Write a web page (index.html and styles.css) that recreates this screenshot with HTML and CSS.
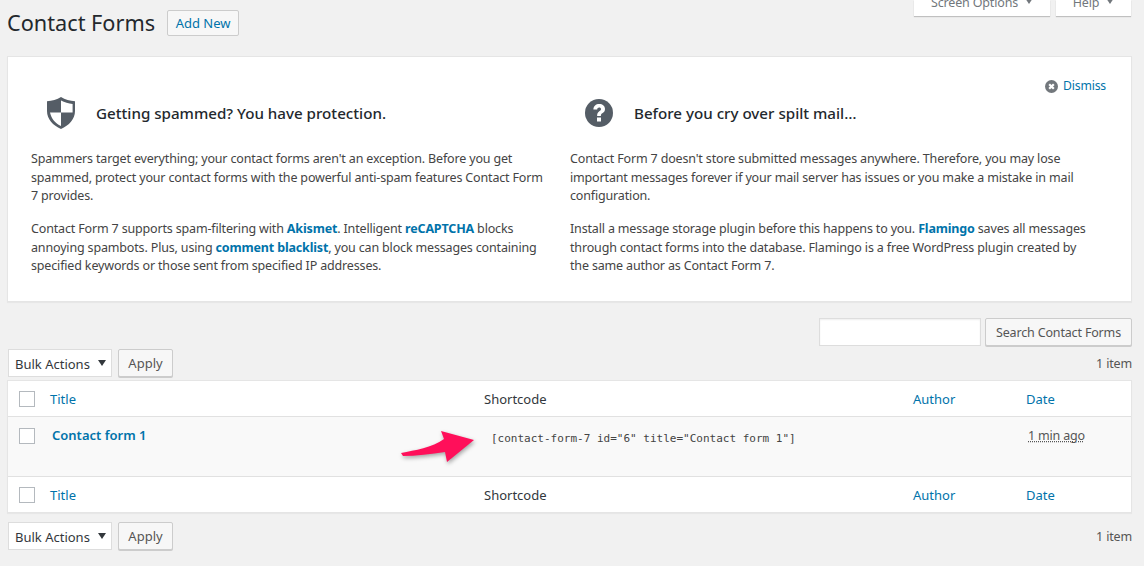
FILE: index.html
```html
<!DOCTYPE html>
<html lang="en">
<head>
<meta charset="utf-8">
<title>Contact Forms</title>
<link rel="stylesheet" href="styles.css">
</head>
<body>
<div class="wrap">
  <header class="page-head">
    <h1>Contact Forms</h1>
    <a class="btn add-new">Add New</a>
    <div class="tabs">
      <div class="tab options"><span>Screen Options</span><i class="caret"></i></div>
      <div class="tab help"><span>Help</span><i class="caret"></i></div>
    </div>
  </header>

  <section class="welcome">
    <a class="dismiss">
      <svg width="13" height="13" viewBox="0 0 13 13"><circle cx="6.5" cy="6.5" r="6.5" fill="#72777c"/><path d="M4.200 4.200l4.600 4.600M8.800 4.200l-4.600 4.600" stroke="#fff" stroke-width="2.200"/></svg>
      Dismiss
    </a>
    <div class="col">
      <div class="col-head">
        <svg class="ico" width="28" height="32" viewBox="0 0 28 32"><path d="M14 0C18 2.600 23 4 28 4.200V14C28 22 22 28.500 14 32 6 28.500 0 22 0 14V4.200C5 4 10 2.600 14 0Z" fill="#555d66"/><path d="M14 3.600C17.500 5.500 21.500 6.700 25.600 7V15.500H14V29C8.500 26.300 4.400 22 3 15.500H14V3.600Z" fill="#fff"/></svg>
        <h2>Getting spammed? You have protection.</h2>
      </div>
      <p>Spammers target everything; your contact forms aren't an exception. Before you get spammed, protect your contact forms with the powerful anti-spam features Contact Form 7 provides.</p>
      <p>Contact Form 7 supports spam-filtering with <a>Akismet</a>. Intelligent <a>reCAPTCHA</a> blocks annoying spambots. Plus, using <a>comment blacklist</a>, you can block messages containing specified keywords or those sent from specified IP addresses.</p>
    </div>
    <div class="col right">
      <div class="col-head">
        <svg class="ico" width="28" height="28" viewBox="0 0 28 28"><circle cx="14" cy="14" r="14" fill="#555d66"/><path d="M8.400 10.600C8.400 7 11 5 14.200 5 17.600 5 20 7 20 10 20 12.300 18.800 13.300 17.300 14.300 16 15.200 15.900 15.700 15.900 17H12.100C12.100 14.700 12.600 13.500 14.300 12.300 15.400 11.500 16 11.100 16 10.200 16 9.200 15.300 8.600 14.200 8.600 13 8.600 12.200 9.400 12.200 10.600Z" fill="#fff"/><rect x="12" y="18.500" width="4" height="4" fill="#fff"/></svg>
        <h2>Before you cry over spilt mail&hellip;</h2>
      </div>
      <p>Contact Form 7 doesn't store submitted messages anywhere. Therefore, you may lose important messages forever if your mail server has issues or you make a mistake in mail configuration.</p>
      <p>Install a message storage plugin before this happens to you. <a>Flamingo</a> saves all messages through contact forms into the database. Flamingo is a free WordPress plugin created by the same author as Contact Form 7.</p>
    </div>
  </section>

  <div class="search-row">
    <input class="search" type="text" aria-label="Search">
    <a class="btn plain find">Search Contact Forms</a>
  </div>

  <div class="tablenav">
    <div class="select">Bulk Actions<i class="caret dark"></i></div>
    <a class="btn plain apply">Apply</a>
    <span class="count">1 item</span>
  </div>

  <div class="table-wrap">
    <table>
      <colgroup><col class="c-cb"><col class="c-title"><col class="c-code"><col class="c-author"><col class="c-date"></colgroup>
      <thead>
        <tr><td class="cb"><i class="check"></i></td><th class="th-title"><a>Title</a></th><th class="dark-th">Shortcode</th><th><a>Author</a></th><th><a>Date</a></th></tr>
      </thead>
      <tbody>
        <tr>
          <td class="cb"><i class="check"></i></td>
          <td class="name"><a>Contact form 1</a></td>
          <td class="code">[contact-form-7 id="6" title="Contact form 1"]</td>
          <td></td>
          <td class="date"><abbr>1 min ago</abbr></td>
        </tr>
      </tbody>
      <tfoot>
        <tr><td class="cb"><i class="check"></i></td><th class="th-title"><a>Title</a></th><th class="dark-th">Shortcode</th><th><a>Author</a></th><th><a>Date</a></th></tr>
      </tfoot>
    </table>
    <svg class="arrow" width="76" height="34" viewBox="0 0 76 34"><path d="M0 22C14 19 31 17 43 8L40 0 73 9 46 31 44 21C30 23 15 25 2 25Z" fill="#ff0f5a"/></svg>
  </div>

  <div class="tablenav bottom">
    <div class="select">Bulk Actions<i class="caret dark"></i></div>
    <a class="btn plain apply">Apply</a>
    <span class="count">1 item</span>
  </div>
</div>
</body>
</html>
```

FILE: styles.css
```css
* { box-sizing: border-box; }
html, body { margin: 0; height: 566px; overflow: hidden; }
body {
  background: #f1f1f1;
  color: #444;
  font: 12.500px/18.500px "Noto Sans", "Open Sans", sans-serif;
  letter-spacing: -.16px;
}
a { color: #0073aa; text-decoration: none; }
.wrap { padding: 0 12px 0 7px; }

.page-head { display: flex; align-items: flex-start; height: 56px; }
h1 { margin: 6px 0 0; font-size: 21.700px; font-weight: 400; line-height: 34px; color: #23282d; letter-spacing: 0; }
.btn {
  display: flex; align-items: center; justify-content: center;
  border: 1px solid #ccc; border-radius: 2px; background: #f7f7f7;
  white-space: nowrap;
}
.add-new { margin: 10px 0 0 12px; width: 72px; height: 26px; color: #0073aa; font-size: 13px; letter-spacing: 0; }
.tabs { display: flex; gap: 6px; margin: 0 1px 0 auto; }
.tab {
  height: 16px; display: flex; align-items: flex-end; gap: 7px; justify-content: center;
  background: #fff; box-shadow: 0 1px 1px rgba(0,0,0,.2);
  color: #72777c; overflow: hidden; line-height: 20px; padding-bottom: 3px;
}
.options { width: 136px; }
.help { width: 75px; }
.tab span { display: block; }
.caret { flex: none; width: 0; height: 0; border: 4px solid transparent; border-top: 6px solid #72777c; border-bottom: 0; margin-bottom: 9px; }

.welcome {
  position: relative; display: grid; grid-template-columns: 520px 520px; column-gap: 19px;
  height: 246px; padding: 40px 0 0 23px;
  background: #fff; border: 1px solid #e5e5e5; box-shadow: 0 1px 1px rgba(0,0,0,.04);
}
.dismiss { position: absolute; right: 25px; top: 20px; display: flex; align-items: center; gap: 5px; font-size: 12.200px; }
.col-head { display: flex; align-items: center; height: 32px; padding-left: 16px; gap: 21px; }
.col-head .ico { flex: none; }
.right .col-head { padding-left: 15px; }
h2 { margin: 0; font-size: 15.150px; font-weight: 500; color: #23282d; letter-spacing: 0; }
.col p { margin: 0 0 14.500px; }
.col p:first-of-type { margin-top: 21px; }
.col p a { font-weight: 700; }

.search-row { display: flex; justify-content: flex-end; gap: 4px; margin-top: 16px; height: 28px; }
.search { width: 162px; height: 28px; background: #fff; border: 1px solid #ddd; box-shadow: inset 0 1px 2px rgba(0,0,0,.07); }
.plain { height: 28px; color: #555; box-shadow: 0 1px 0 #ccc; }
.find { width: 147px; padding-top: 2px; }

.tablenav { display: flex; align-items: flex-start; gap: 6px; height: 31px; margin-top: 3px; }
.select { display: flex; align-items: center; justify-content: space-between; width: 104px; height: 28px; margin-left: 1px; padding: 2px 5px 0 6px; background: #fff; border: 1px solid #ddd; color: #32373c; font-size: 13px; letter-spacing: 0; }
.caret.dark { border-top-color: #32373c; margin: 0 0 2px; }
.apply { width: 55px; padding-top: 1px; font-size: 13px; letter-spacing: 0; }
.count { margin: 6px 0 0 auto; color: #555; }

.table-wrap { position: relative; height: 133px; background: #fff; border: 1px solid #e5e5e5; box-shadow: 0 1px 1px rgba(0,0,0,.04); font-size: 13px; letter-spacing: 0; }
table { width: 100%; height: 100%; border-collapse: collapse; table-layout: fixed; }
.c-cb { width: 33px; }
.c-title { width: 433px; }
.c-code { width: 429px; }
.c-author { width: 113px; }
.c-date { width: 115px; }
th, td { padding: 0 10px; text-align: left; font-weight: 400; }
th { padding-top: 2px; }
.th-title { padding-left: 9px; }
thead tr { height: 35px; border-bottom: 1px solid #e1e1e1; }
tbody tr { height: 60px; background: #f9f9f9; vertical-align: top; }
tfoot tr { height: 36px; border-top: 1px solid #e1e1e1; }
.dark-th { color: #32373c; }
.cb { padding: 2px 0 0 11px; vertical-align: middle; }
tbody .cb { vertical-align: top; padding-top: 11px; }
.check { display: block; width: 16px; height: 16px; background: #fff; border: 1px solid #b4b9be; }
.name { padding: 9px 11px; font-weight: 600; }
.code { padding: 13px 17px; font: 11px/18px "DejaVu Sans Mono", monospace; color: #444; white-space: nowrap; }
.date { padding-top: 10px; font-size: 12.500px; letter-spacing: -.18px; }
abbr { text-decoration: underline dotted; color: #555; margin-left: 2px; }
.arrow { position: absolute; left: 393px; top: 50px; filter: drop-shadow(1px 2px 2px rgba(0,0,0,.35)); }

.bottom { margin-top: 9px; }
```
